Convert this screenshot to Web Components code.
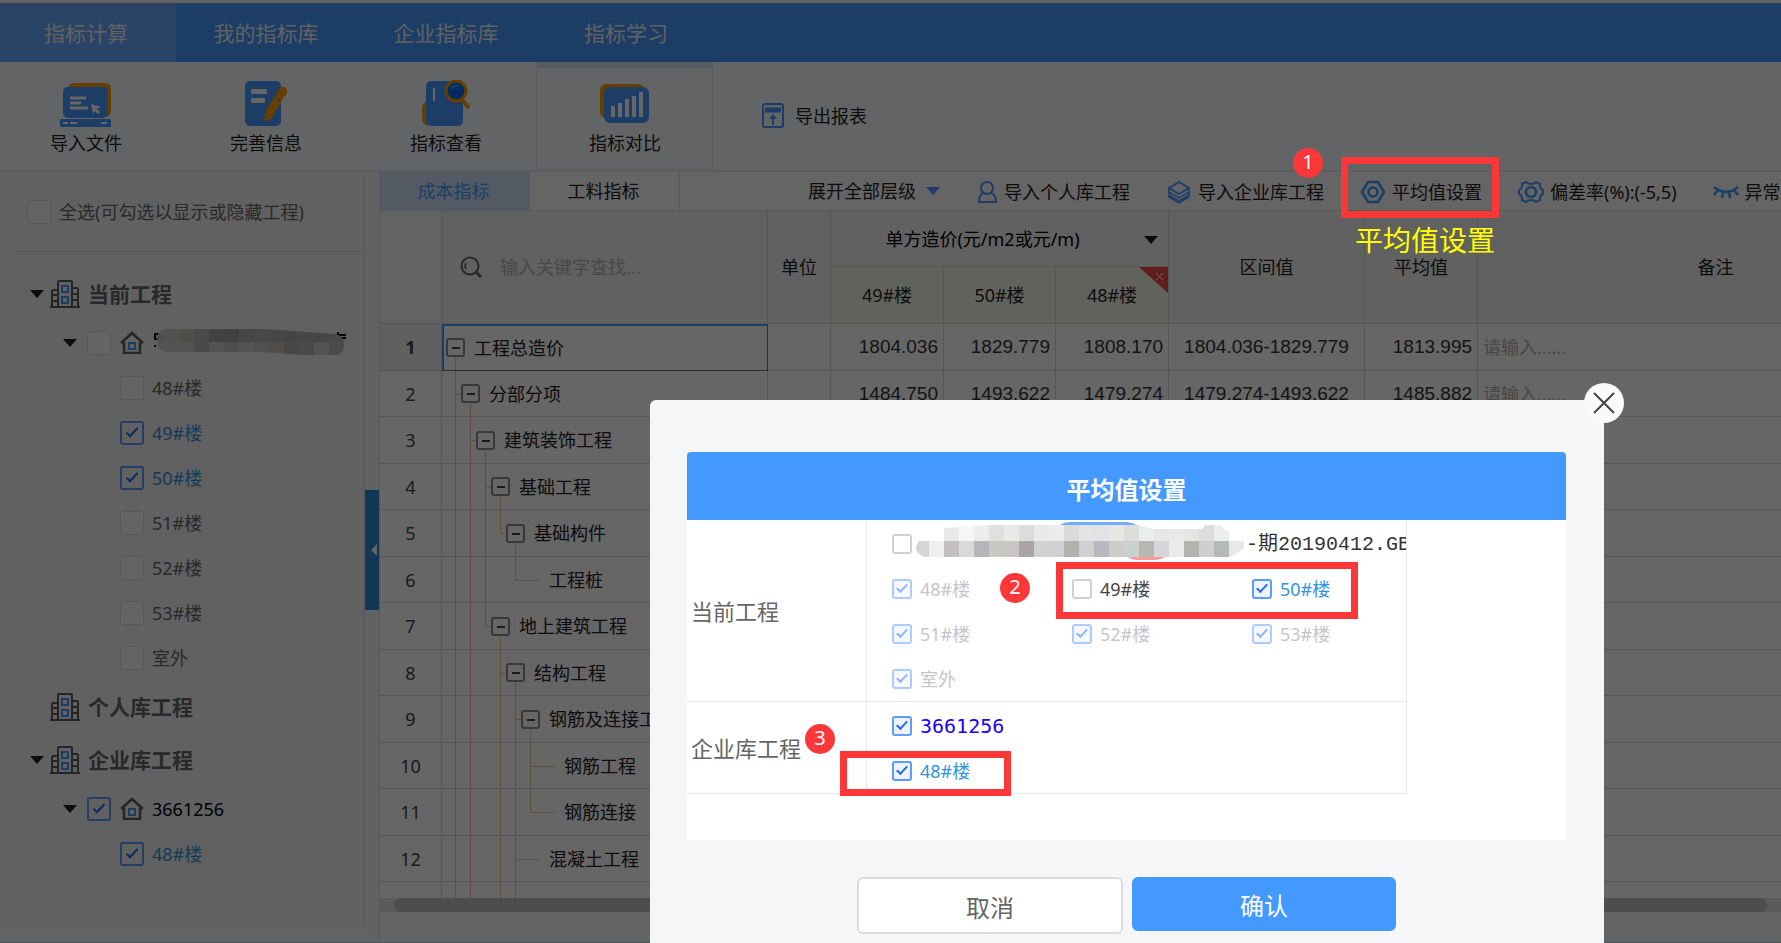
<!DOCTYPE html>
<html lang="zh-CN">
<head>
<meta charset="utf-8">
<title>指标对比</title>
<style>
html, body { margin: 0; height: 100%; }
body {
  font: 18px/24px "Noto Sans", "Noto Sans CJK SC", sans-serif;
  color: #333; background: #f8f9fb; overflow: hidden;
}
</style>
</head>
<body>
<index-app></index-app>

<script>
function define(name, build, ready) {
  customElements.define(name, class extends HTMLElement {
    connectedCallback() {
      if (this.shadowRoot) return;
      const root = this.attachShadow({ mode: 'open' });
      root.innerHTML = typeof build === 'function' ? build(this) : build;
      if (ready) ready(root, this);
    }
  });
}

const buttonReset = `button { font: inherit; color: inherit; background: none; border: 0; padding: 0; margin: 0; white-space: nowrap; cursor: pointer; }`;

/* ---------- icons ---------- */
const icons = {
  'import': ['0 0 52 44', `
    <rect x="8" y="0" width="43" height="34" rx="6" fill="#ff9c00"/>
    <rect x="3" y="4" width="45" height="31" rx="5" fill="#4499ff"/>
    <rect x="0" y="36" width="51" height="8" rx="1" fill="#4499ff"/>
    <path d="M10 15h16M10 20h11M10 25h18" stroke="#fff" stroke-width="3"/>
    <path d="M31 21l10 3-4 2 3 3-2 2-3-3-2 3z" fill="#fff"/>
    <path d="M3 40h5m2 0h7m24 0h6" stroke="#fff" stroke-width="2"/>`],
  'edit': ['0 0 44 46', `
    <rect x="1" y="0" width="36" height="45" rx="5" fill="#4499ff"/>
    <rect x="7" y="8" width="16" height="5" rx="1" fill="#fff"/>
    <rect x="7" y="17" width="14" height="5" rx="1" fill="#fff"/>
    <path d="M34 10l7 4-13 23-8 4 1-10z" fill="#ff9c00"/>
    <path d="M35 8q2-3 5-2 4 2 3 6l-2 3-8-4z" fill="#ff9c00"/>
    <path d="M33 18l3 1" stroke="#4499ff" stroke-width="2"/>`],
  'view': ['0 0 48 47', `
    <path d="M0 29q0-7 6-8v25q-6-1-6-9z" fill="#ff9c00"/>
    <rect x="4" y="1" width="37" height="45" rx="5" fill="#4499ff"/>
    <path d="M12 8v13" stroke="#fff" stroke-width="2"/>
    <ellipse cx="34" cy="11" rx="10" ry="10" fill="#0b6cf0" stroke="#ff9c00" stroke-width="3"/>
    <path d="M40 20l7 8" stroke="#ff9c00" stroke-width="4"/>
    <path d="M29 9q3-4 8-3" stroke="#4499ff" stroke-width="2" fill="none"/>`],
  'compare': ['0 0 50 40', `
    <rect x="0" y="0" width="44" height="34" rx="6" fill="#ff9c00"/>
    <rect x="4" y="3" width="45" height="36" rx="6" fill="#4499ff"/>
    <path d="M13 33V22M20 33V19M27 33V15M34 33V12M41 33V8" stroke="#fff" stroke-width="4"/>`],
  'export': ['0 0 22 26', `
    <rect x="1" y="1" width="20" height="23" rx="2" fill="none" stroke="#4499ff" stroke-width="2"/>
    <path d="M3 7h16" stroke="#4499ff" stroke-width="5"/>
    <path d="M11 22v-9" stroke="#4499ff" stroke-width="2"/><path d="M7 16l4-5 4 5z" fill="#4499ff"/>`],
  'person': ['4 0 22 24', `
    <ellipse cx="15" cy="8" rx="6" ry="6" fill="none" stroke="#4499ff" stroke-width="2"/>
    <path d="M11 13q-4 2-4 9h17q0-7-5-9" fill="none" stroke="#4499ff" stroke-width="2" stroke-linejoin="round"/>`],
  'stack': ['0 0 26 24', `
    <path d="M13 2l10 6-10 6L3 8z" fill="none" stroke="#4499ff" stroke-width="2" stroke-linejoin="round"/>
    <path d="M3 12l10 6 10-6M3 15l10 6 10-6M3 8v9l10 6 10-6V8" fill="none" stroke="#4499ff" stroke-width="1.5"/>`],
  'hexagon': ['0 0 26 24', `
    <path d="M8 2h10l6 10-6 10H8L2 12z" fill="none" stroke="#4499ff" stroke-width="2.5" stroke-linejoin="round"/>
    <circle cx="13" cy="12" r="4.5" fill="none" stroke="#4499ff" stroke-width="2.5"/>`],
  'gear': ['0 0 26 24', `
    <path d="M8 2q2 2 5 2t5-2l4 2q-1 4 3 6v4q-4 2-3 6l-4 2q-2-2-5-2t-5 2l-4-2q1-4-3-6v-4q4-2 3-6z" fill="none" stroke="#4499ff" stroke-width="2" stroke-linejoin="round"/>
    <circle cx="13" cy="12" r="5" fill="none" stroke="#4499ff" stroke-width="2.5"/>`],
  'eye': ['0 0 26 24', `
    <path d="M1 7q12 10 24 0M5 10l-4 5M10 12l-1 6M16 12l1 6M21 10l4 5" fill="none" stroke="#4499ff" stroke-width="2.5"/>`],
  'building': ['0 0 30 28', `
    <path d="M8 27V2q0-1 1-1h12q1 0 1 1v25M8 10H3q-1 0-1 2v15M22 8h5q1 0 1 2v17M0 27h30M2 15h6M2 21h6M22 14h6M22 20h6" fill="none" stroke="#5c5c5c" stroke-width="2"/>
    <rect x="12" y="6" width="6" height="6" fill="none" stroke="#4499ff" stroke-width="2"/>
    <rect x="12" y="17" width="6" height="6" fill="none" stroke="#4499ff" stroke-width="2"/>`],
  'house': ['0 0 24 23', `
    <path d="M1 12L12 2l11 10M4 11v11h16V11" fill="none" stroke="#5c5c5c" stroke-width="2.5"/>
    <rect x="9" y="12" width="6" height="6" fill="none" stroke="#4499ff" stroke-width="2"/>`],
  'search': ['0 0 22 22', `
    <circle cx="10" cy="10" r="8.5" fill="none" stroke="#666" stroke-width="2"/>
    <path d="M16 16l5 5" stroke="#666" stroke-width="3"/><path d="M6 7q-2 3 0 6" fill="none" stroke="#666" stroke-width="1.5"/>`],
  'down': ['0 0 14 8', `<path d="M0 0h14L7 8z" fill="currentColor"/>`],
  'left': ['0 0 6 12', `<path d="M6 0v12L0 6z" fill="currentColor"/>`],
  'close': ['0 0 22 22', `<path d="M1 1l20 20M21 1L1 21" stroke="#444" stroke-width="2"/>`]
};
define('app-icon', el => {
  const [box, art] = icons[el.getAttribute('name')];
  const [, , w, h] = box.split(' ');
  return `<style>:host{display:block;flex:none;line-height:0}</style>
    <svg width="${w}" height="${h}" viewBox="${box}" aria-hidden="true">${art}</svg>`;
});

/* ---------- check box with its label ---------- */
define('check-box', el => `
<style>
  :host { display: flex; flex: none; }
  label { display: flex; align-items: center; gap: var(--check-gap, 8px); color: var(--check-text, #666); white-space: nowrap; }
  label.on { color: #3492dd; }
  label.off { color: #c4c6ca; }
  input {
    appearance: none; flex: none; margin: 0; box-sizing: border-box; position: relative;
    width: var(--check-size, 24px); height: var(--check-size, 24px);
    border: var(--check-border, 1px) solid var(--check-line, #dcdcdc); border-radius: 3px; background: var(--check-fill, #fafafa);
  }
  input:checked { border: 2px solid #5c9bff; background: var(--check-on, transparent); }
  input:checked::after {
    content: ""; position: absolute; left: 50%; top: 42%; width: var(--tick, 10px); height: 4px;
    border: solid #2468f5; border-width: 0 0 2px 2px; transform: translate(-50%, -50%) rotate(-47deg);
  }
  input:disabled { opacity: .5; }
</style>
<label class="${el.hasAttribute('disabled') ? 'off' : el.hasAttribute('checked') ? 'on' : ''}">
  <input type="checkbox" ${el.hasAttribute('checked') ? 'checked' : ''} ${el.hasAttribute('disabled') ? 'disabled' : ''}
    ${el.hasAttribute('name') ? `aria-label="${el.getAttribute('name')}"` : ''}><slot></slot></label>`);

/* ---------- main navigation ---------- */
define('main-nav', `
<style>
  :host { display: block; background: #4499ff; border-top: 3px solid #f4f4f4; }
  nav { display: grid; grid-template-columns: 176px 180px 180px 180px; height: 59px; }
  a { display: flex; align-items: center; justify-content: center; font-size: 21px; color: #f2f2f2; text-decoration: none; }
  a.on { background: #66aaff; padding-right: 4px; }
</style>
<nav><a class="on" href="#calc">指标计算</a><a href="#mine">我的指标库</a><a href="#company">企业指标库</a><a href="#study">指标学习</a></nav>`);

/* ---------- tool bar ---------- */
define('tool-bar', `
<style>
  :host { display: flex; height: 108px; background: #f8fafe; border-bottom: 2px solid #e8e8ea; }
  .tools { display: grid; grid-template-columns: 176px 180px 180px 178px; }
  ${buttonReset}
  .tools button { display: flex; flex-direction: column; align-items: center; justify-content: flex-end; gap: 4px; padding-bottom: 15px; color: #222; }
  .tools button:first-child { padding-right: 4px; }
  .tools .on { box-sizing: border-box; border: 2px solid #eaf0fc; border-top: 6px solid #dfe8f8; padding-bottom: 13px; gap: 7px; }
  .export { display: flex; align-items: center; gap: 11px; margin-left: 48px; color: #222; }
</style>
<div class="tools">
  <button><app-icon name="import"></app-icon>导入文件</button>
  <button><app-icon name="edit"></app-icon>完善信息</button>
  <button><app-icon name="view"></app-icon>指标查看</button>
  <button class="on"><app-icon name="compare"></app-icon>指标对比</button>
</div>
<button class="export"><app-icon name="export"></app-icon>导出报表</button>`);

/* ---------- project tree ---------- */
define('tree-row', el => `
<style>
  :host { display: flex; align-items: center; height: 45px; padding-left: 120px; }
  :host([level="1"]) { height: 53px; padding-left: 30px; font-size: 21px; font-weight: 700; color: #666; }
  :host([level="2"]) { padding-left: 63px; color: #000; }
  .arrow { width: 14px; color: #222; }
  :host([level="1"]) .arrow { margin-right: 6px; }
  :host([level="1"]) app-icon:last-of-type { margin-right: 8px; }
  :host([level="2"]) .arrow, :host([level="2"]) app-icon { margin-right: 10px; }
  :host([level="2"]) app-icon { margin-right: 8px; }
  :host([level="2"]) check-box { margin-right: 9px; --check-gap: 0; }
</style>
${el.getAttribute('level') === '1' ? `
  <div class="arrow">${el.hasAttribute('open') ? '<app-icon name="down"></app-icon>' : ''}</div>
  <app-icon name="building"></app-icon><slot></slot>` :
  el.getAttribute('level') === '2' ? `
  <div class="arrow"><app-icon name="down"></app-icon></div>
  <check-box name="工程" ${el.hasAttribute('checked') ? 'checked' : ''}></check-box>
  <app-icon name="house"></app-icon><slot></slot>` :
  `<check-box ${el.hasAttribute('checked') ? 'checked' : ''}><slot></slot></check-box>`}`);

define('redacted-name', () => {
  const top = ['#c8c8c2', '#cacac8', '#c4c2ba', '#b8b8b4', '#a2a6a4', '#9ea2a2', '#b0b0b0', '#b4b4b2', '#b0b0ae', '#acacac', '#aeb0b2', '#acacac', '#b6b6b6'];
  const low = ['#d0cfd0', '#d2d2d0', '#d0d0cc', '#bcb8b4', '#d0d0d0', '#bfc3c5', '#d0d2d2', '#c8c8c4', '#c6c2b8', '#b8b4ae', '#b4b8b8', '#cfcfd3', '#c0bcb0'];
  const row = (list, y, h) => list.map((c, i) => `<rect x="${i * 15 - 3}" y="${y}" width="15" height="${h}" fill="${c}"/>`).join('');
  return `<style>:host{display:block;padding-top:4px}</style>
  <svg width="196" height="28" viewBox="0 0 196 28" aria-hidden="true">
    <clipPath id="c"><path d="M14 1H112L182 6q10 1 10 11t-10 10h-32L112 24H14Q5 22 5 12T14 1z"/></clipPath>
    <path d="M7 6H3v5h3M3 17v2M150 6h8M164 6h4M178 7h16M186 4v8l-5-2M188 10h6" stroke="#111" stroke-width="2" fill="none"/>
    <g clip-path="url(#c)"><rect width="196" height="28" fill="#cdd0cf"/>${row(top, 0, 14)}${row(low, 14, 14)}</g>
  </svg>`;
});

define('project-tree', `
<style>
  :host { display: block; box-sizing: border-box; background: #f3f3f3; border-right: 2px solid #e6e6e6; overflow: hidden; }
  .all { height: 80px; display: flex; align-items: center; padding-left: 27px; margin-bottom: 15px; position: relative; }
  .all::after { content: ""; position: absolute; left: 12px; right: 0; bottom: 0; border-bottom: 2px solid #e8e8e8; }
</style>
<div class="all"><check-box>全选(可勾选以显示或隐藏工程)</check-box></div>
<tree-row level="1" open>当前工程</tree-row>
<tree-row level="2"><redacted-name></redacted-name></tree-row>
<tree-row>48#楼</tree-row>
<tree-row checked>49#楼</tree-row>
<tree-row checked>50#楼</tree-row>
<tree-row>51#楼</tree-row>
<tree-row>52#楼</tree-row>
<tree-row>53#楼</tree-row>
<tree-row>室外</tree-row>
<tree-row level="1">个人库工程</tree-row>
<tree-row level="1" open>企业库工程</tree-row>
<tree-row level="2" checked>3661256</tree-row>
<tree-row checked>48#楼</tree-row>`);

/* ---------- tabs and actions over the grid ---------- */
define('grid-bar', `
<style>
  :host { display: flex; height: 38px; background: #fdfdfd; border-bottom: 1px solid #dcdcdc; overflow: hidden; color: #222; }
  ${buttonReset}
  .tab { width: 150px; flex: none; border-right: 1px solid #dcdcdc; box-sizing: border-box; padding-right: 2px; }
  .tab.on { background: #d2e2fa; color: #4499ff; }
  .actions { display: flex; gap: 36px; margin-left: 128px; }
  .actions button { display: flex; align-items: center; gap: 6px; padding-top: 2px; }
  .actions .expand { gap: 10px; padding-top: 0; }
  .expand app-icon { color: #4499ff; }
</style>
<button class="tab on">成本指标</button><button class="tab">工料指标</button>
<div class="actions">
  <button class="expand">展开全部层级<app-icon name="down"></app-icon></button>
  <button><app-icon name="person"></app-icon>导入个人库工程</button>
  <button><app-icon name="stack"></app-icon>导入企业库工程</button>
  <button><app-icon name="hexagon"></app-icon>平均值设置</button>
  <button><app-icon name="gear"></app-icon>偏差率(%):(-5,5)</button>
  <button><app-icon name="eye"></app-icon>异常</button>
</div>`);

/* ---------- index grid ----------
   guide codes: v = line through, h = line with branch, l = last branch, _ = none */
const rows = [
  ['工程总造价', '', 1, '1804.036', '1829.779', '1808.170', '1804.036-1829.779', '1813.995'],
  ['分部分项', 'h', 1, '1484.750', '1493.622', '1479.274', '1479.274-1493.622', '1485.882'],
  ['建筑装饰工程', 'vh', 1],
  ['基础工程', 'vvh', 1],
  ['基础构件', 'vvvl', 1],
  ['工程桩', 'vvv_l', 0],
  ['地上建筑工程', 'vvl', 1],
  ['结构工程', 'vv_h', 1],
  ['钢筋及连接工程', 'vv_vh', 1],
  ['钢筋工程', 'vv_vvh', 0],
  ['钢筋连接', 'vv_vvl', 0],
  ['混凝土工程', 'vv_vh', 0],
  ['', 'vv_vv', 0]
];
define('index-grid', () => `
<style>
  :host { display: block; overflow: hidden; position: relative; isolation: isolate; background: #fefefe; }
  .view { height: 687px; overflow: hidden; }
  table { border-collapse: separate; border-spacing: 0; table-layout: fixed; width: 1574px; }
  th, td { box-sizing: border-box; padding: 0; border-right: 1px solid #d6d6d6; border-bottom: 1px solid #d6d6d6; font-weight: 400; white-space: nowrap; overflow: hidden; }
  thead th { background: #f2f2f2; color: #222; position: relative; }
  thead th:first-child { background: #f7f7f7; }
  thead tr:first-child { height: 56px; }
  thead tr:last-child { height: 57px; }
  thead tr:last-child th { background: #f5f6e6; }
  thead .unitprice { color: #000; }
  .unitprice app-icon { position: absolute; right: 10px; top: 25px; color: #222; }
  .search { display: flex; align-items: center; gap: 18px; padding-left: 18px; }
  input { font: inherit; border: 0; padding: 0; margin: 0; background: none; color: #333; min-width: 0; width: 220px; }
  input::placeholder { color: #b4b4b4; opacity: 1; }
  .corner { position: absolute; right: 0; top: 0; width: 29px; height: 26px; padding: 0; border: 0; background: #f24848; clip-path: polygon(0 0, 100% 0, 100% 100%); }
  .corner svg { position: absolute; right: 4px; top: 5px; }
  tbody tr { height: 46px; }
  tbody tr:nth-child(odd) { height: 47px; }
  tbody th { text-align: center; color: #444; }
  tbody tr:first-child th { font-weight: 700; background: #efefef; }
  td.num { font: 19px/24px "Liberation Sans", sans-serif; text-align: right; padding-right: 5px; }
  td.mid { text-align: center; padding: 0; }
  td.note { padding-left: 5px; }
  .cell { display: flex; align-items: center; height: 45px; padding-left: 13px; color: #222; }
  tr:nth-child(odd) .cell { height: 46px; }
  i { flex: none; align-self: stretch; width: 15px; position: relative; }
  .v::before, .h::before { content: ""; position: absolute; left: 0; top: 0; bottom: 0; border-left: 1px solid #f0c49c; }
  .l::before { content: ""; position: absolute; left: 0; top: 0; height: 50%; border-left: 1px solid #f0c49c; }
  .h::after, .l::after { content: ""; position: absolute; left: 0; top: 50%; width: 15px; border-top: 1px solid #f0c49c; }
  .leaf .h::after, .leaf .l::after { width: 25px; }
  .leaf span { padding-left: 19px; }
  .box { flex: none; align-self: stretch; display: flex; align-items: center; position: relative; margin: 0 9px 0 -9px; z-index: 1; }
  .box button { width: 19px; height: 19px; box-sizing: border-box; border: 2px solid #8c8c8c; border-radius: 3px; background: #fefefe; padding: 0; position: relative; }
  .box button::after { content: ""; position: absolute; left: 4px; right: 3px; top: 7px; border-top: 2px solid #444; }
  .box::after { content: ""; position: absolute; left: 9px; top: 32px; bottom: 0; border-left: 1px solid #f0c49c; }
  tbody tr:first-child td:nth-child(2) { border-color: #777; border-top: 1px solid #4499ff; box-shadow: inset 2px 1px #4499ff; }
  tbody tr:first-child .cell { height: 45px; }
  .scroll { height: 14px; background: #e3e3e3; padding: 0 14px; }
  .thumb { height: 14px; border-radius: 7px; background: #c0c0c0; }
</style>
<div class="view">
<table>
  <colgroup><col style="width:62px"><col style="width:326px"><col style="width:63px"><col style="width:113px"><col style="width:112px"><col style="width:113px"><col style="width:196px"><col style="width:113px"><col style="width:476px"></colgroup>
  <thead>
    <tr><th rowspan="2"></th>
      <th rowspan="2"><div class="search"><app-icon name="search"></app-icon><input placeholder="输入关键字查找..." aria-label="查找"></div></th>
      <th rowspan="2">单位</th><th colspan="3" class="unitprice"><span style="margin-right:34px">单方造价(元/m2或元/m)</span><app-icon name="down"></app-icon></th>
      <th rowspan="2">区间值</th><th rowspan="2">平均值</th><th rowspan="2">备注</th></tr>
    <tr><th>49#楼</th><th>50#楼</th><th>48#楼<button class="corner" aria-label="移除"><svg width="9" height="9" viewBox="0 0 9 9"><path d="M1 1l7 7M8 1L1 8" stroke="#fff"/></svg></button></th></tr>
  </thead>
  <tbody>${rows.map(([name, guides, box, a = '', b = '', c = '', range = '', avg = ''], n) => `
    <tr><th scope="row">${name ? n + 1 : ''}</th>
      <td><div class="cell ${box ? '' : 'leaf'}">${[...guides].map(g => `<i class="${g}"></i>`).join('')}${box ? '<div class="box"><button aria-label="收起"></button></div>' : ''}<span>${name}</span></div></td>
      <td></td><td class="num">${a}</td><td class="num">${b}</td><td class="num">${c}</td>
      <td class="num mid">${range}</td><td class="num">${avg}</td>
      <td class="note">${a ? '<input placeholder="请输入......" aria-label="备注">' : ''}</td></tr>`).join('')}
  </tbody>
</table>
</div>
<div class="scroll"><div class="thumb"></div></div>`);

/* ---------- annotations ---------- */
define('step-badge', `
<style>
  :host { position: absolute; width: 30px; height: 30px; border-radius: 50%; background: #fc3737; color: #fff; font-size: 20px; line-height: 28px; text-align: center; }
</style><slot></slot>`);
define('step-frame', `<style>:host { position: absolute; box-sizing: border-box; border: 7px solid #fc3737; pointer-events: none; }</style>`);

/* ---------- dialog ---------- */
define('pixel-cover', () => {
  const top = ['#fff', '#fff', '#e9e9ea', '#f5f6f7', '#ecedec', '#e2e0de', '#e8e9e9', '#dddcdd', '#e9e9e8', '#ebecec', '#dcdbd9', '#e3e4e3', '#e1e3e6', '#e9e6e3', '#dcdcda', '#ebeeee', '#e4e6e7', '#e9e9e9', '#e6e5e3', '#dadcde', '#eee', '#fff'];
  const low = ['#d8d5d6', '#efefef', '#c3c0bf', '#d7dad8', '#b5b6ba', '#cac8c3', '#c8c5c3', '#aaa4a9', '#d0d2d1', '#ced0d2', '#b2b1ac', '#d0d0d3', '#b7b9be', '#cfcbc6', '#cbd0d1', '#b8b7b2', '#d5d6da', '#ebebeb', '#b3b3b0', '#cfcfcd', '#b4b9ba', '#e8e8e7'];
  const row = (list, y) => list.map((c, i) => `<rect x="${i * 15 - 2}" y="${y}" width="15" height="16" fill="${c}"/>`).join('');
  return `<style>:host{display:block}</style>
  <svg width="330" height="38" viewBox="0 0 330 38" aria-hidden="true">
    <clipPath id="m"><path d="M8 35Q0 32 0 26T14 8q40-5 90-6h110q12 1 22 5h50l4-5h10q6 1 8 5 14 6 22 15 0 5-16 13H8z"/></clipPath>
    <path d="M143 4q2-3 10-4h58q8 1 10 4z" fill="#71adff"/><path d="M210 33h42q-4 4-12 5h-20q-8-1-10-5z" fill="#ff9a9a"/>
    <g clip-path="url(#m)">${row(top, 3)}${row(low, 19)}</g>
  </svg>`;
});

define('average-dialog', `
<style>
  :host { display: block; box-sizing: border-box; padding: 52px 38px 0 37px; background: #f5f6f8; border-radius: 6px 6px 0 0; }
  ${buttonReset}
  .close { position: absolute; right: -20px; top: -17px; width: 40px; height: 40px; border-radius: 50%; background: #fafafb; display: grid; place-items: center; }
  h2 { margin: 0; height: 68px; line-height: 75px; font-size: 24px; text-align: center; color: #fff; background: #4499ff; border-radius: 4px 4px 0 0; }
  .body { background: #fff; height: 320px; --check-size: 20px; --check-gap: 8px; --check-line: #d0d0d0; --check-border: 2px; --check-fill: #fff; --check-on: #edf3ff; --check-text: #444; --tick: 9px; }
  table { border-collapse: separate; border-spacing: 0; table-layout: fixed; width: 720px; }
  th, td { box-sizing: border-box; padding: 0; border: solid #e8e8e8; border-width: 0 1px 1px 0; }
  th { width: 180px; padding-left: 4px; font-size: 22px; font-weight: 400; text-align: left; color: #666; }
  td { padding-top: 1px; }
  .checks { display: grid; grid-template-columns: repeat(3, 180px); grid-auto-rows: 45px; align-items: center; padding-left: 25px; overflow: hidden; }
  .wide { grid-column: 1 / -1; display: flex; align-items: center; overflow: hidden; }
  .file { font: 20px/24px "Liberation Mono", "Noto Sans CJK SC", monospace; color: #333; white-space: nowrap; padding-top: 2px; }
  .file-check { --check-gap: 4px; }
  .lib { font: 20px/24px "DejaVu Sans Mono", monospace; color: #1a00ff; }
  .buttons { display: flex; justify-content: center; align-items: flex-start; gap: 9px; margin-top: 37px; font-size: 24px; }
  .buttons button { width: 264px; height: 54px; border-radius: 6px; background: #4499ff; color: #fff; padding-top: 4px; }
  .buttons .cancel { box-sizing: border-box; width: 266px; height: 57px; border: 2px solid #dcdcdc; background: #fff; color: #666; }
</style>
<button class="close" aria-label="关闭"><app-icon name="close"></app-icon></button>
<h2>平均值设置</h2>
<div class="body">
<table>
  <tr><th scope="row">当前工程</th><td><div class="checks">
    <div class="wide"><check-box class="file-check" name="工程文件"><pixel-cover></pixel-cover></check-box><span class="file">-期20190412.GB</span></div>
    <check-box checked disabled>48#楼</check-box><check-box>49#楼</check-box><check-box checked>50#楼</check-box>
    <check-box checked disabled>51#楼</check-box><check-box checked disabled>52#楼</check-box><check-box checked disabled>53#楼</check-box>
    <check-box checked disabled>室外</check-box></div></td></tr>
  <tr><th scope="row">企业库工程</th><td><div class="checks">
    <div class="wide"><check-box checked><span class="lib">3661256</span></check-box></div>
    <check-box checked>48#楼</check-box></div></td></tr>
</table>
</div>
<div class="buttons"><button class="cancel">取消</button><button>确认</button></div>
<step-badge style="left:350px;top:173px">2</step-badge>
<step-frame style="left:406px;top:162px;width:302px;height:57px"></step-frame>
<step-badge style="left:155px;top:324px">3</step-badge>
<step-frame style="left:190px;top:351px;width:171px;height:45px"></step-frame>`);

/* ---------- page ---------- */
define('index-app', `
<style>
  :host { display: flex; flex-direction: column; height: 100vh; position: relative; overflow: hidden; }
  main { flex: 1; display: grid; grid-template-columns: 365px 15px minmax(0, 1fr); min-height: 0; }
  project-tree { margin-bottom: 15px; }
  .rail { display: flex; flex-direction: column; background: #f6f6f6; border-right: 1px solid #ddd; }
  .rail button { margin-top: 318px; height: 120px; border: 0; padding: 0 0 0 4px; background: #2f88d6; color: #fff; }
  .work { display: flex; flex-direction: column; min-width: 0; background: #fbfbfb; }
  footer { height: 1px; background: #c8d4e6; }
  .shade { position: absolute; inset: 0; background: rgba(0, 0, 0, .6); }
  average-dialog { position: absolute; right: 177px; top: 400px; bottom: 0; width: 954px; }
  .hint { position: absolute; left: 1355px; top: 222px; font-size: 28px; line-height: 36px; color: #ff0; }
</style>
<main-nav></main-nav>
<tool-bar></tool-bar>
<main>
  <project-tree></project-tree>
  <div class="rail"><button aria-label="收起侧栏"><app-icon name="left"></app-icon></button></div>
  <div class="work"><grid-bar></grid-bar><index-grid></index-grid></div>
</main>
<footer></footer>
<div class="shade"></div>
<average-dialog role="dialog" aria-label="平均值设置"></average-dialog>
<step-badge style="left:1293px;top:148px">1</step-badge>
<step-frame style="left:1341px;top:157px;width:158px;height:61px"></step-frame>
<div class="hint">平均值设置</div>`);
</script>
</body>
</html>
